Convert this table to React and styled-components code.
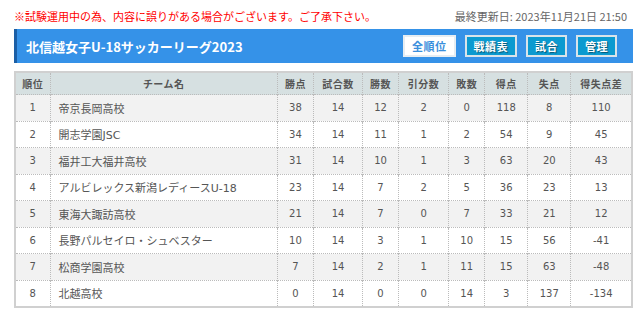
import styled, { createGlobalStyle } from "styled-components";

const teams = [
  { rank: 1, name: "帝京長岡高校", pts: 38, games: 14, w: 12, d: 2, l: 0, gf: 118, ga: 8, diff: 110 },
  { rank: 2, name: "開志学園JSC", pts: 34, games: 14, w: 11, d: 1, l: 2, gf: 54, ga: 9, diff: 45 },
  { rank: 3, name: "福井工大福井高校", pts: 31, games: 14, w: 10, d: 1, l: 3, gf: 63, ga: 20, diff: 43 },
  { rank: 4, name: "アルビレックス新潟レディースU-18", pts: 23, games: 14, w: 7, d: 2, l: 5, gf: 36, ga: 23, diff: 13 },
  { rank: 5, name: "東海大諏訪高校", pts: 21, games: 14, w: 7, d: 0, l: 7, gf: 33, ga: 21, diff: 12 },
  { rank: 6, name: "長野パルセイロ・シュベスター", pts: 10, games: 14, w: 3, d: 1, l: 10, gf: 15, ga: 56, diff: -41 },
  { rank: 7, name: "松商学園高校", pts: 7, games: 14, w: 2, d: 1, l: 11, gf: 15, ga: 63, diff: -48 },
  { rank: 8, name: "北越高校", pts: 0, games: 14, w: 0, d: 0, l: 14, gf: 3, ga: 137, diff: -134 },
];

const columns = [
  { label: "順位", width: 35 },
  { label: "チーム名", width: 227 },
  { label: "勝点", width: 36 },
  { label: "試合数", width: 49 },
  { label: "勝数", width: 36 },
  { label: "引分数", width: 50 },
  { label: "敗数", width: 36 },
  { label: "得点", width: 43 },
  { label: "失点", width: 43 },
  { label: "得失点差", width: 61 },
];

const GlobalStyle = createGlobalStyle`
  body {
    margin: 0;
    background: #fff;
    font-family: "DejaVu Sans", "Noto Sans CJK JP", sans-serif;
    color: #555;
  }
`;

const Page = styled.div`
  padding: 8px 7px 0 14px;
`;

const Notice = styled.div`
  display: flex;
  justify-content: space-between;
  align-items: center;
  height: 16px;
  padding-right: 6px;
  font-family: "Noto Sans CJK JP", sans-serif;
  font-size: 11px;
`;

const Warning = styled.span`
  color: #f00;
`;

const Updated = styled.span`
  color: #666;
`;

const TitleBar = styled.div`
  display: flex;
  align-items: center;
  justify-content: space-between;
  height: 34px;
  margin-top: 5px;
  padding: 0 16px 0 9px;
  background: #3592e8;
  border-left: 3px solid #1b5fa6;
`;

const Title = styled.h1`
  margin: 0;
  color: #fff;
  font-family: "Noto Sans CJK JP", sans-serif;
  font-size: 13px;
  font-weight: 700;
`;

const Nav = styled.nav`
  display: flex;
  gap: 9px;
`;

const NavButton = styled.a`
  display: flex;
  align-items: center;
  height: 22px;
  box-sizing: border-box;
  padding: 0 7px;
  border: 2px solid ${({ $active }) => ($active ? "#e6edf2" : "#d8e3ea")};
  background: ${({ $active }) => ($active ? "#fff" : "#0b9ad0")};
  color: ${({ $active }) => ($active ? "#3a8fdc" : "#fff")};
  text-shadow: ${({ $active }) => ($active ? "none" : "1px 1px 1px rgba(0,0,0,.45)")};
  font-family: "Noto Sans CJK JP", sans-serif;
  font-size: 11px;
  font-weight: 700;
  letter-spacing: 0.5px;
  cursor: pointer;
`;

const Table = styled.table`
  width: 619px;
  margin-top: 8px;
  border-collapse: collapse;
  table-layout: fixed;
  border: 2px solid #d0d0d0;
`;

const HeadCell = styled.th`
  height: 21px;
  padding: 0;
  background: #d6e0e1;
  border-left: 1px dotted #bbb;
  font-family: "Noto Sans CJK JP", sans-serif;
  font-size: 10px;
  font-weight: 700;
  letter-spacing: 0.5px;
  color: #555;
  text-align: center;
`;

const Row = styled.tr`
  background: ${({ $odd }) => ($odd ? "#f2f2f2" : "#fff")};
`;

const Cell = styled.td`
  height: 25.5px;
  padding: 0 ${({ $left }) => ($left ? "8px" : "0")};
  border-left: 1px dotted #bbb;
  border-top: 1px dotted #bbb;
  font-size: ${({ $left }) => ($left ? "11px" : "10px")};
  color: #555;
  text-align: ${({ $left }) => ($left ? "left" : "center")};
  white-space: nowrap;
`;

export default function App() {
  return (
    <>
      <GlobalStyle />
      <Page>
        <Notice>
          <Warning>※試験運用中の為、内容に誤りがある場合がございます。ご了承下さい。</Warning>
          <Updated>最終更新日: 2023年11月21日 21:50</Updated>
        </Notice>
        <TitleBar>
          <Title>北信越女子U-18サッカーリーグ2023</Title>
          <Nav>
            <NavButton $active>全順位</NavButton>
            <NavButton>戦績表</NavButton>
            <NavButton>試合</NavButton>
            <NavButton>管理</NavButton>
          </Nav>
        </TitleBar>
        <Table>
          <colgroup>
            {columns.map((c) => (
              <col key={c.label} style={{ width: c.width }} />
            ))}
          </colgroup>
          <thead>
            <tr>
              {columns.map((c) => (
                <HeadCell key={c.label}>{c.label}</HeadCell>
              ))}
            </tr>
          </thead>
          <tbody>
            {teams.map((t) => (
              <Row key={t.rank} $odd={t.rank % 2 === 1}>
                <Cell>{t.rank}</Cell>
                <Cell $left>{t.name}</Cell>
                <Cell>{t.pts}</Cell>
                <Cell>{t.games}</Cell>
                <Cell>{t.w}</Cell>
                <Cell>{t.d}</Cell>
                <Cell>{t.l}</Cell>
                <Cell>{t.gf}</Cell>
                <Cell>{t.ga}</Cell>
                <Cell>{t.diff}</Cell>
              </Row>
            ))}
          </tbody>
        </Table>
      </Page>
    </>
  );
}
